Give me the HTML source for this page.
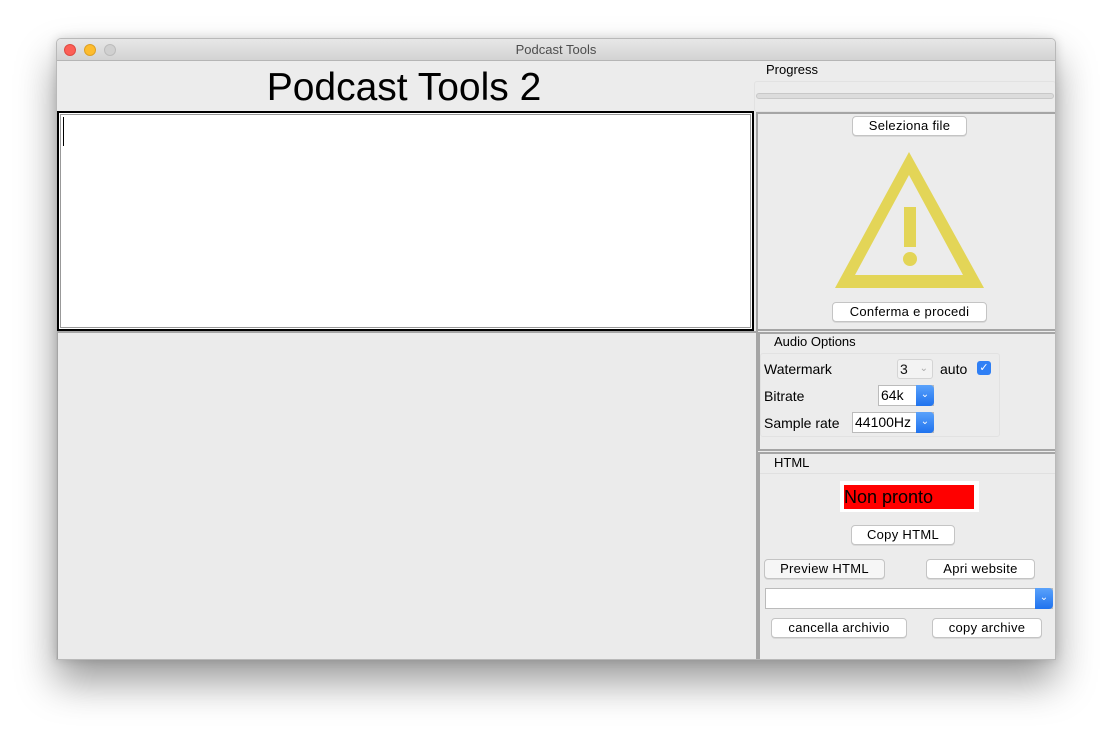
<!DOCTYPE html>
<html><head><meta charset="utf-8"><style>
*{box-sizing:border-box;margin:0;padding:0}
body{width:1112px;height:734px;background:#fff;position:relative;overflow:hidden;font-family:"Liberation Sans",sans-serif;font-size:13px;color:#000}
.a{position:absolute}
.win{left:56px;top:38px;width:1000px;height:622px;background:#ececec;border-radius:5px 5px 0 0;border:1px solid #b9b9b9;box-shadow:0 22px 40px rgba(0,0,0,.4),0 0 10px rgba(0,0,0,.15);overflow:hidden}
.in{position:absolute;left:0;top:0;width:1000px;height:622px}
.tb{left:-1px;top:-1px;width:1000px;height:23px;background:linear-gradient(#e8e8e8,#d3d3d3);border-bottom:1px solid #b5b5b5;text-align:center;font-size:13px;color:#4d4d4d;line-height:23px}
.dot{width:12px;height:12px;border-radius:50%;top:5px}
.btn{background:#fff;border:1px solid #c4c4c4;border-radius:4px;text-align:center;font-size:13px;line-height:18px;height:20px;box-shadow:0 1px 0 rgba(0,0,0,.08);letter-spacing:.3px}
.sel{background:#fff;border:1px solid #bbb;height:21px;font-size:14px;line-height:19px;padding-left:2px}
.arr{position:absolute;right:-1px;top:-1px;width:18px;height:21px;background:linear-gradient(#5aa2fb,#1f72ee);border-radius:0 4px 4px 0;color:#fff;font-size:10px;text-align:center;line-height:20px}
.lbl{font-size:14px}
</style></head><body>
<div class="a win"><div class="in">
  <div class="a tb">Podcast Tools</div>
  <div class="a dot" style="left:7px;background:#fc5f57;border:1px solid #df4a42"></div>
  <div class="a dot" style="left:27px;background:#fdbc2e;border:1px solid #dea123"></div>
  <div class="a dot" style="left:47px;background:#d0d0d0;border:1px solid #bcbcbc"></div>

  <div class="a" style="left:0;top:26px;width:694px;text-align:center;font-size:39px;line-height:46px">Podcast Tools 2</div>

  <div class="a" style="left:0;top:72px;width:697px;height:220px;border:2px solid #000;background:#fff">
    <div class="a" style="left:1px;top:1px;right:1px;bottom:1px;border:1px solid #999"></div>
    <div class="a" style="left:4px;top:4px;width:1px;height:29px;background:#000"></div>
  </div>
  <div class="a" style="left:0;top:292px;width:701px;height:330px;border:2px solid #a5a5a5;border-bottom:none;border-left:1px solid #a5a5a5;background:#ebebeb"></div>

  <div class="a" style="left:709px;top:23px;font-size:13px">Progress</div>
  <div class="a" style="left:697px;top:42px;width:302px;height:31px;border:1px solid #e2e2e2;border-radius:3px"></div>
  <div class="a" style="left:699px;top:54px;width:298px;height:6px;border:1px solid #c8c8c8;border-radius:3px;background:#dcdcdc"></div>

  <div class="a" style="left:699px;top:73px;width:301px;height:219px;border:2px solid #a5a5a5;border-right:none"></div>
  <div class="a btn" style="left:795px;top:77px;width:115px">Seleziona file</div>
  <svg class="a" style="left:778px;top:112px" width="150" height="140" viewBox="778 112 150 140">
    <path fill="#e3d557" fill-rule="evenodd" d="M852 113 L927 249 L778 249 Z M852 136 L798 236 L906 236 Z"/>
    <rect x="847" y="168" width="12" height="40" fill="#e3d557"/>
    <circle cx="853" cy="220" r="7" fill="#e3d557"/>
  </svg>
  <div class="a btn" style="left:775px;top:263px;width:155px">Conferma e procedi</div>

  <div class="a" style="left:701px;top:293px;width:299px;height:119px;border:2px solid #a5a5a5"></div>
  <div class="a" style="left:717px;top:295px">Audio Options</div>
  <div class="a" style="left:703px;top:314px;width:240px;height:84px;border:1px solid #e2e2e2;border-radius:3px"></div>
  <div class="a lbl" style="left:707px;top:322px">Watermark</div>
  <div class="a" style="left:840px;top:320px;width:36px;height:20px;background:#f3f3f3;border:1px solid #d4d4d4;border-radius:3px;font-size:14px;padding-left:2px;line-height:18px;color:#111">3<span style="position:absolute;right:4px;color:#aaa;font-size:10px">&#8964;</span></div>
  <div class="a lbl" style="left:883px;top:322px">auto</div>
  <div class="a" style="left:920px;top:322px;width:14px;height:14px;border-radius:3px;background:#2f7ff5;color:#fff;font-size:11px;text-align:center;line-height:14px">&#10003;</div>
  <div class="a lbl" style="left:707px;top:349px">Bitrate</div>
  <div class="a sel" style="left:821px;top:346px;width:56px">64k<div class="arr">&#8964;</div></div>
  <div class="a lbl" style="left:707px;top:376px">Sample rate</div>
  <div class="a sel" style="left:795px;top:373px;width:82px">44100Hz<div class="arr">&#8964;</div></div>

  <div class="a" style="left:701px;top:413px;width:299px;height:209px;border:2px solid #a5a5a5;border-bottom:none"></div>
  <div class="a" style="left:717px;top:416px">HTML</div>
  <div class="a" style="left:703px;top:434px;width:297px;height:180px;border-top:1px solid #e0e0e0"></div>
  <div class="a" style="left:783px;top:442px;width:139px;height:31px;background:#fff"></div>
  <div class="a" style="left:787px;top:446px;width:130px;height:24px;background:#f00;font-size:18px;line-height:24px">Non pronto</div>
  <div class="a btn" style="left:794px;top:486px;width:104px">Copy HTML</div>
  <div class="a btn" style="left:707px;top:520px;width:121px;background:#f6f6f6">Preview HTML</div>
  <div class="a btn" style="left:869px;top:520px;width:109px">Apri website</div>
  <div class="a sel" style="left:708px;top:549px;width:288px"><div class="arr">&#8964;</div></div>
  <div class="a btn" style="left:714px;top:579px;width:136px">cancella archivio</div>
  <div class="a btn" style="left:875px;top:579px;width:110px">copy archive</div>
</div></div>
</body></html>
